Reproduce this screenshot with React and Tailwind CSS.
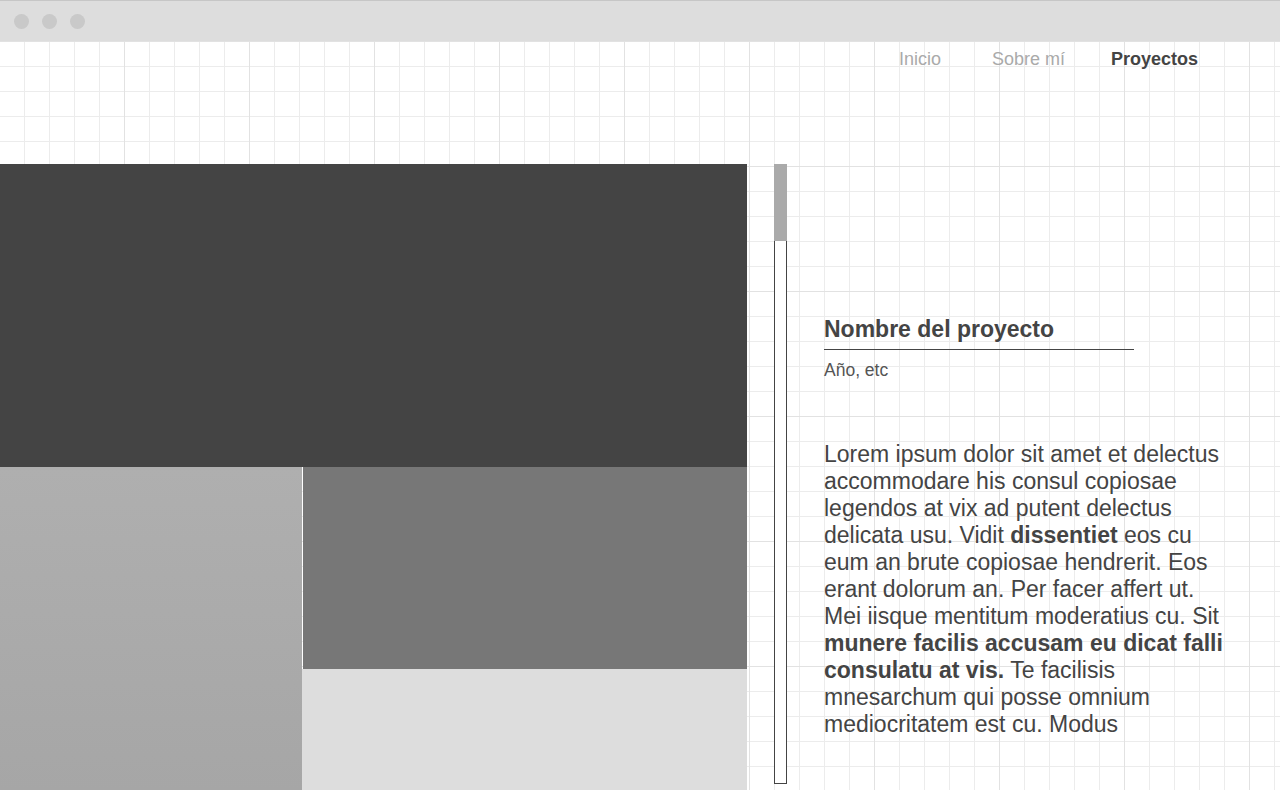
const NAV = [
  { label: 'Inicio', active: false, gap: '' },
  { label: 'Sobre mí', active: false, gap: 'ml-[51px]' },
  { label: 'Proyectos', active: true, gap: 'ml-[46px]' },
]

export default function App() {
  return (
    <div className="w-[1280px] h-[790px] overflow-hidden bg-white font-['Liberation_Sans',Arial,sans-serif]">
      {/* window chrome */}
      <div className="h-[41px] bg-[#dddddd] border-t border-[#c6c6c6] flex items-center gap-[13px] pl-[14px]">
        <span className="w-[15px] h-[15px] rounded-full bg-[#c9c9c9]" />
        <span className="w-[15px] h-[15px] rounded-full bg-[#c9c9c9]" />
        <span className="w-[15px] h-[15px] rounded-full bg-[#c9c9c9]" />
      </div>

      {/* page on grid paper */}
      <div className="h-[749px] bg-white bg-[linear-gradient(to_right,#e2e2e2_1px,transparent_1px),linear-gradient(to_bottom,#e2e2e2_1px,transparent_1px),linear-gradient(to_right,#ececec_1px,transparent_1px),linear-gradient(to_bottom,#ececec_1px,transparent_1px)] bg-[length:125px_125px,125px_125px,25px_25px,25px_25px] bg-[position:-1px_0,-1px_0,-1px_0,-1px_0]">
        <nav className="h-[123px] flex justify-end items-start pt-[6px] pr-[82px] text-[18px] leading-[24px]">
          {NAV.map(item => (
            <a
              key={item.label}
              className={`${item.gap} ${item.active ? 'font-bold text-[#444444]' : 'text-[#aaaaaa]'}`}
            >
              {item.label}
            </a>
          ))}
        </nav>

        <div className="flex h-[626px]">
          {/* image collage */}
          <div className="w-[747px] flex flex-col shrink-0">
            <div className="h-[303px] bg-[#444444]" />
            <div className="flex flex-1">
              <div className="w-[302px] bg-gradient-to-b from-[#afafaf] to-[#a6a6a6]" />
              <div className="flex-1 flex flex-col">
                <div className="h-[202px] bg-[#777777] ml-px" />
                <div className="flex-1 bg-[#dddddd]" />
              </div>
            </div>
          </div>

          {/* scrollbar */}
          <div className="ml-[27px] w-[13px] h-[620px] border border-[#444444] bg-white flex flex-col">
            <div className="h-[77px] -mx-px -mt-px bg-[#aaaaaa]" />
          </div>

          {/* project text */}
          <div className="ml-[37px] pt-[152px] w-[410px] text-[#444444]">
            <h2 className="text-[23px] font-bold leading-[26px]">Nombre del proyecto</h2>
            <div className="w-[310px] h-px bg-[#444444] mt-[7px]" />
            <p className="text-[17.5px] text-[#555555] mt-[9px] leading-[22px]">Año, etc</p>
            <p className="mt-[60px] w-[402px] text-[23px] leading-[27px] h-[297px] overflow-hidden">
              Lorem ipsum dolor sit amet et delectus accommodare his consul copiosae legendos at vix ad putent delectus delicata usu. Vidit <b>dissentiet</b> eos cu eum an brute copiosae hendrerit. Eos erant dolorum an. Per facer affert ut. Mei iisque mentitum moderatius cu. Sit <b>munere facilis accusam eu dicat falli consulatu at vis.</b> Te facilisis mnesarchum qui posse omnium mediocritatem est cu. Modus
            </p>
          </div>
        </div>
      </div>
    </div>
  )
}
